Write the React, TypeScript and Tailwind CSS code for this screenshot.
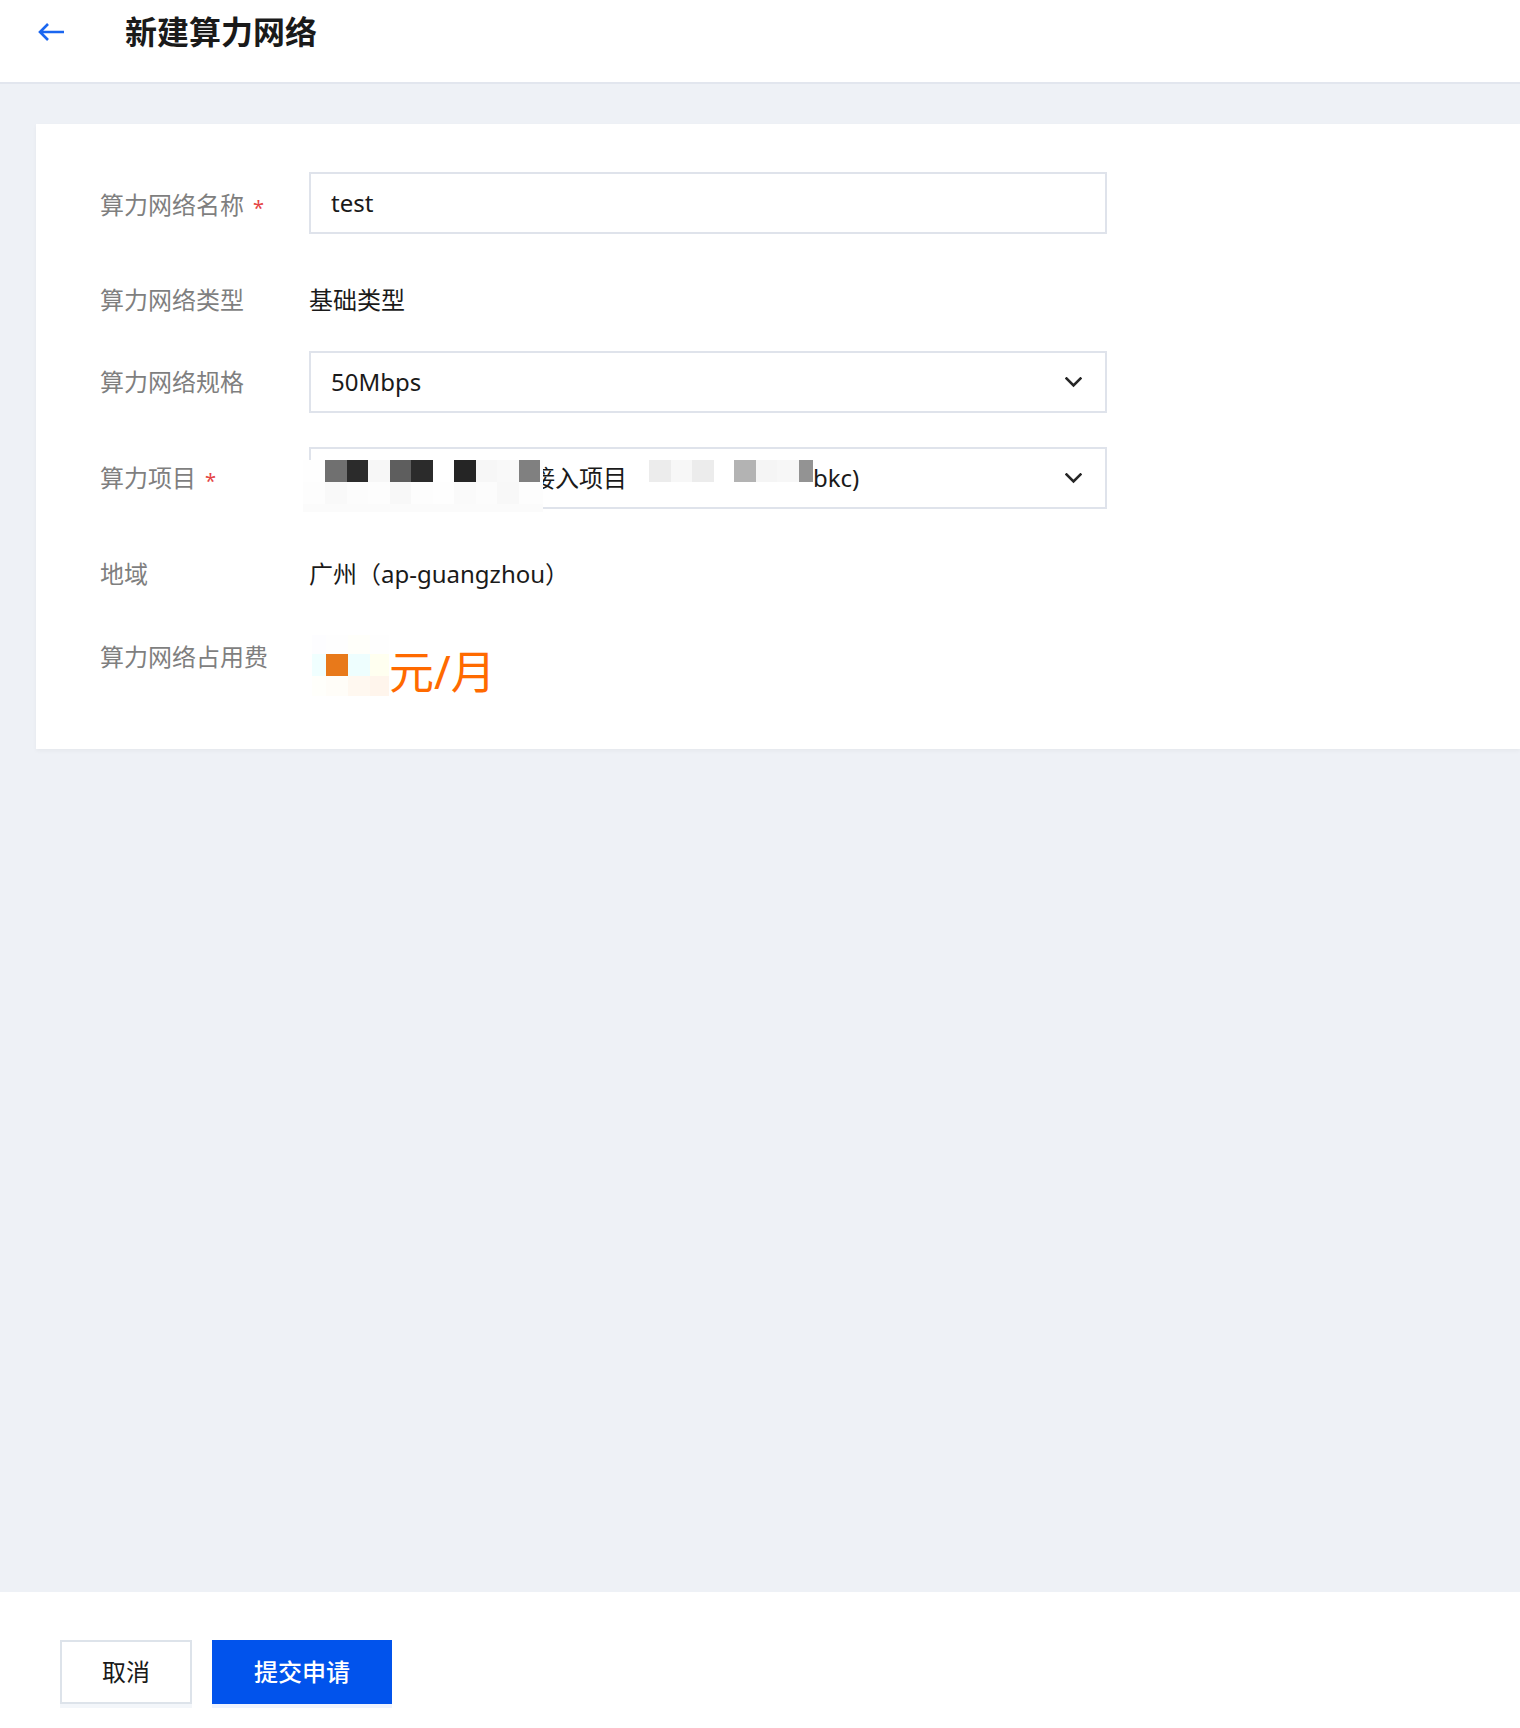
import React from "react";

const Chevron = () => (
  <svg width="17" height="11" viewBox="0 0 17 11" fill="none">
    <path d="M1.5 1.5 L8.5 8.5 L15.5 1.5" stroke="#262626" strokeWidth="2.6" strokeLinecap="square" />
  </svg>
);

const Star = () => <span className="ml-[9px] text-[20px] leading-none text-[#e54545] relative top-[3px]">*</span>;

const row1 = ["#707070", "#2b2b2b", "#f7f7f7", "#5e5e5e", "#2b2b2b", "#ffffff", "#252525", "#f7f7f7", "#f9f9f9", "#808080"];
const row2 = ["#f9f9f9", "#fcfcfc", "#fdfdfd", "#f8f8f8", "#fdfdfd", "#fefefe", "#fafafa", "#fcfcfc", "#f8f8f8", "#fdfdfd"];
const m2: [number, string][] = [
  [22, "#ececec"],
  [21, "#f7f7f7"],
  [22, "#ececec"],
  [20, "#ffffff"],
  [22, "#b3b3b3"],
  [21, "#f5f5f5"],
  [22, "#f7f7f7"],
  [14, "#939393"],
];
const priceCols = [14, 22, 22, 19];
const priceRows: [number, string[]][] = [
  [19, ["#fdfdff", "#fefefe", "#fffffa", "#fefefe"]],
  [22, ["#f0ffff", "#e8791a", "#eefefe", "#fffff0"]],
  [20, ["#fffffb", "#fffdf8", "#fff8f0", "#fff5ec"]],
];

export default function App() {
  return (
    <div className="min-h-screen flex flex-col bg-[#eef1f6] font-['Noto_Sans','Noto_Sans_CJK_SC',sans-serif]">
      <header className="h-[84px] shrink-0 bg-white border-b-2 border-[#e2e6ee] flex items-center pb-[18px]">
        <button className="ml-[38px] w-[27px] h-[20px] flex items-center">
          <svg width="27" height="20" viewBox="0 0 27 20" fill="none">
            <path d="M2 10 H26 M10 2 L2 10 L10 18" stroke="#1a66f0" strokeWidth="2.6" strokeLinejoin="miter" />
          </svg>
        </button>
        <h1 className="ml-[60px] text-[32px] leading-[44px] font-bold text-[#1a1a1a]">新建算力网络</h1>
      </header>

      <main className="flex-1 pt-[40px]">
        <div className="ml-[36px] bg-white pt-[48px] pb-[44px] pl-[64px] shadow-[0_2px_4px_rgba(0,0,0,0.04)] text-[24px]">
          {/* row 1 */}
          <div className="flex items-center h-[62px]">
            <div className="w-[209px] flex items-center text-[#7f7f7f] pt-[3px]">
              算力网络名称
              <Star />
            </div>
            <div className="w-[798px] h-[62px] border-2 border-[#dfe3eb] flex items-center px-[20px] text-[#1a1a1a]">test</div>
          </div>

          {/* row 2 */}
          <div className="flex items-center h-[32px] mt-[50px]">
            <div className="w-[209px] text-[#7f7f7f]">算力网络类型</div>
            <div className="text-[#1a1a1a]">基础类型</div>
          </div>

          {/* row 3 */}
          <div className="flex items-center h-[62px] mt-[35px]">
            <div className="w-[209px] text-[#7f7f7f]">算力网络规格</div>
            <div className="w-[798px] h-[62px] border-2 border-[#dfe3eb] flex items-center justify-between pl-[20px] pr-[23px] text-[#1a1a1a]">
              <span>50Mbps</span>
              <Chevron />
            </div>
          </div>

          {/* row 4 */}
          <div className="flex items-center h-[62px] mt-[34px]">
            <div className="w-[209px] flex items-center text-[#7f7f7f]">
              算力项目
              <Star />
            </div>
            <div className="relative w-[798px] h-[62px] border-2 border-[#dfe3eb] flex items-center justify-between pl-[20px] pr-[23px] text-[#1a1a1a]">
              <div className="flex items-center">
                <span className="ml-[200px]">接入项目</span>
                <span className="ml-[22px] flex mb-[14px]">
                  {m2.map(([w, c], i) => (
                    <span key={i} className="h-[22px] block" style={{ width: w, background: c }} />
                  ))}
                </span>
                <span>bkc)</span>
              </div>
              <Chevron />
              <div className="absolute left-[-8px] top-[11px] w-[240px] h-[52px] bg-[#fdfdfd] flex flex-col">
                <div className="flex h-[22px]">
                  <span className="w-[22px] bg-[#fefefe]" />
                  {row1.map((c, i) => (
                    <span key={i} className="w-[21.5px] h-[22px]" style={{ background: c }} />
                  ))}
                </div>
                <div className="flex h-[22px]">
                  <span className="w-[22px] bg-[#fdfdfd]" />
                  {row2.map((c, i) => (
                    <span key={i} className="w-[21.5px] h-[22px]" style={{ background: c }} />
                  ))}
                </div>
                <div className="flex-1 bg-[#fbfbfb]" />
              </div>
            </div>
          </div>

          {/* row 5 */}
          <div className="flex items-center h-[32px] mt-[49px]">
            <div className="w-[209px] text-[#7f7f7f]">地域</div>
            <div className="text-[#1a1a1a]">广州（ap-guangzhou）</div>
          </div>

          {/* row 6 */}
          <div className="flex items-start mt-[51px]">
            <div className="w-[209px] leading-[32px] text-[#7f7f7f]">算力网络占用费</div>
            <div className="h-[64px] flex items-center">
              <div className="ml-[3px] mb-[15px] flex flex-col">
                {priceRows.map(([h, cs], r) => (
                  <div key={r} className="flex">
                    {cs.map((c, i) => (
                      <span key={i} className="block" style={{ width: priceCols[i], height: h, background: c }} />
                    ))}
                  </div>
                ))}
              </div>
              <span className="text-[45px] leading-none text-[#ff6a00] pb-[4px]">元/月</span>
            </div>
          </div>
        </div>
      </main>

      <footer className="h-[136px] shrink-0 bg-white pt-[48px] pl-[60px] flex items-start gap-[20px]">
        <button className="w-[132px] h-[64px] border-2 border-[#dde3ea] bg-white text-[24px] text-[#1a1a1a] shadow-[0_4px_0_#f3f6fa]">取消</button>
        <button className="w-[180px] h-[64px] bg-[#0153ec] text-[24px] font-medium text-white shadow-[0_4px_0_#eef3fe]">提交申请</button>
      </footer>
    </div>
  );
}
